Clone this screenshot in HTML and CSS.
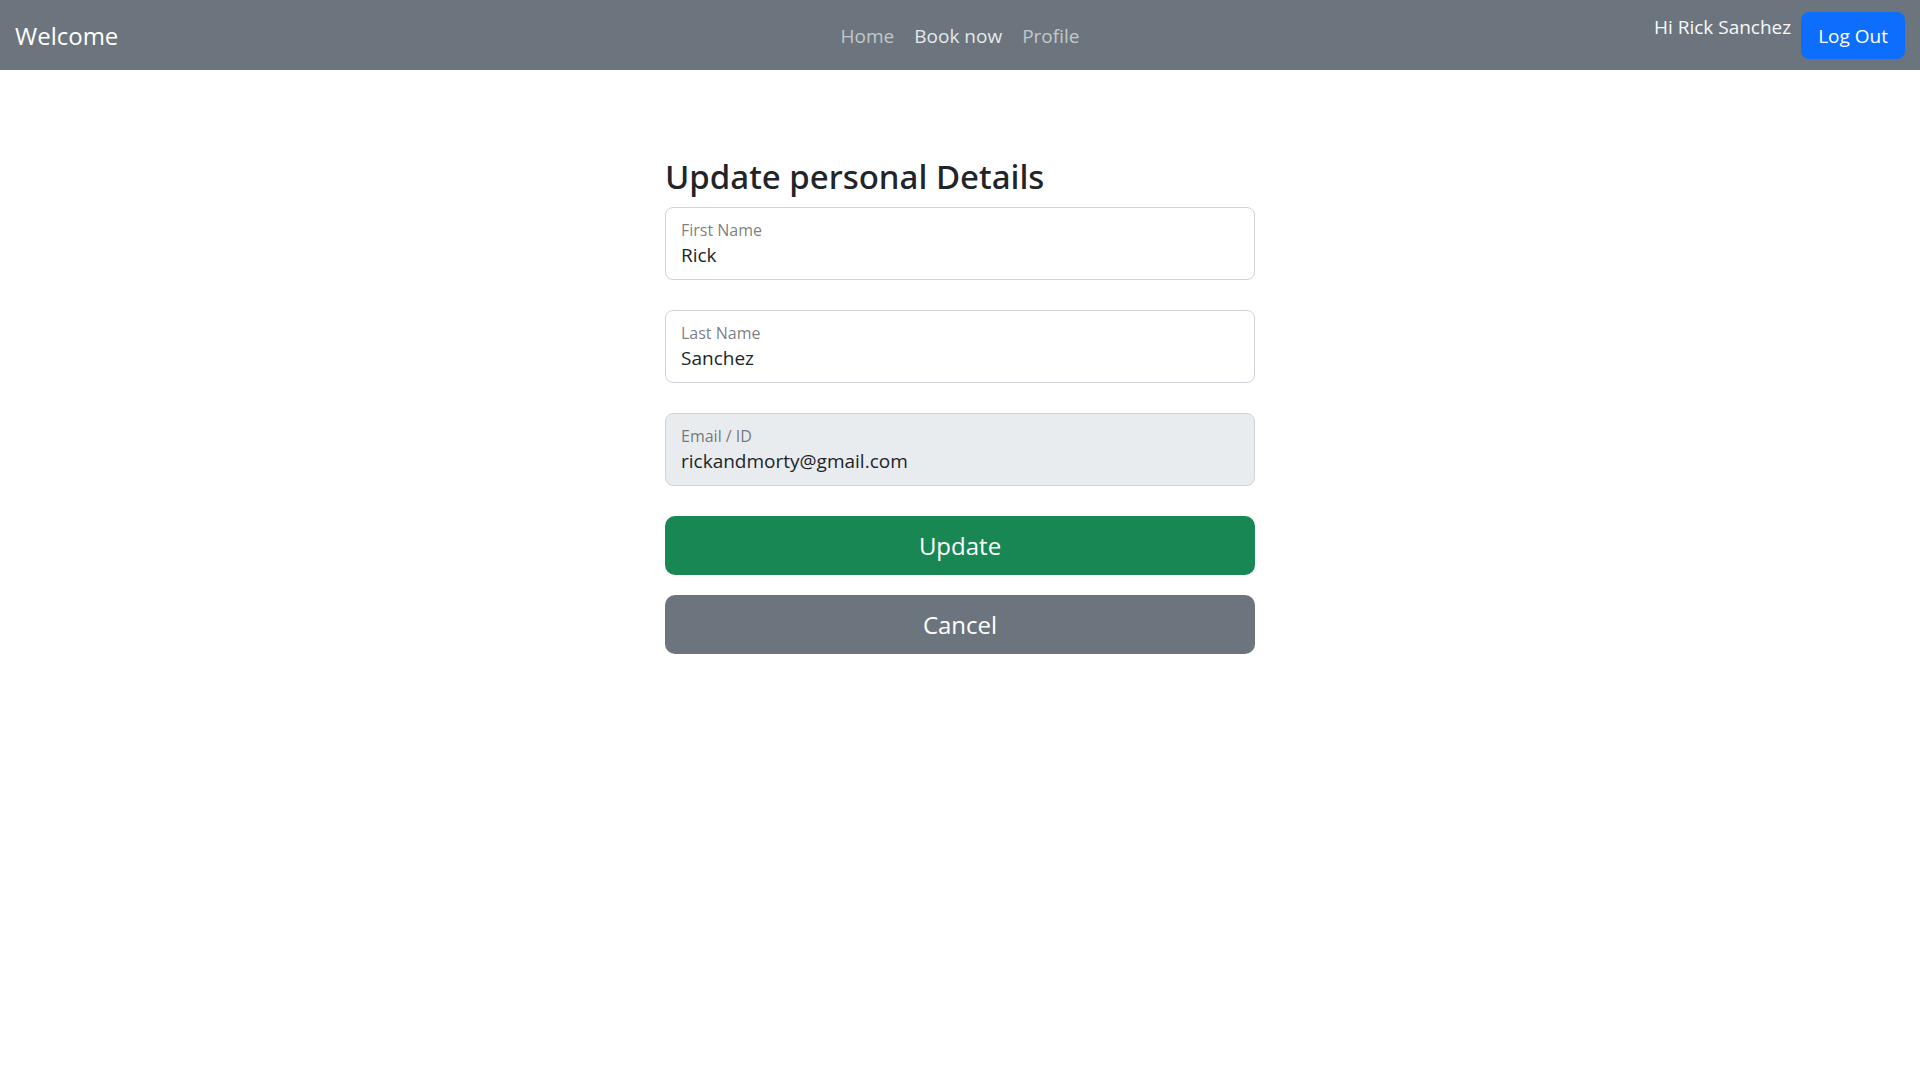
FILE: index.html
```html
<!DOCTYPE html>
<html lang="en">
<head>
  <meta charset="utf-8">
  <meta name="viewport" content="width=device-width, initial-scale=1">
  <title>Update personal Details</title>
  <link rel="stylesheet" href="styles.css">
</head>
<body>
  <header class="navbar">
    <a class="brand" href="#">Welcome</a>
    <nav class="nav-links">
      <a class="nav-link" href="#">Home</a>
      <a class="nav-link nav-link-active" href="#">Book now</a>
      <a class="nav-link" href="#">Profile</a>
    </nav>
    <div class="account">
      <span class="greeting">Hi Rick Sanchez</span>
      <button class="btn btn-primary" type="button">Log Out</button>
    </div>
  </header>
  <main class="page">
    <form class="details">
      <h1 class="title">Update personal Details</h1>
      <div class="field">
        <input class="control" id="first-name" type="text" value="Rick">
        <label class="label" for="first-name">First Name</label>
      </div>
      <div class="field">
        <input class="control" id="last-name" type="text" value="Sanchez">
        <label class="label" for="last-name">Last Name</label>
      </div>
      <div class="field">
        <input class="control" id="email" type="email" value="rickandmorty@gmail.com" readonly>
        <label class="label" for="email">Email / ID</label>
      </div>
      <div class="actions">
        <button class="btn btn-large btn-success" type="submit">Update</button>
        <button class="btn btn-large btn-secondary" type="button">Cancel</button>
      </div>
    </form>
  </main>
</body>
</html>
```
FILE: styles.css
```css
* {
  box-sizing: border-box;
}

body {
  margin: 0;
  background: #fff;
  color: #212529;
  font-family: "Segoe UI", "Open Sans", "Noto Sans", sans-serif;
  font-size: 19px;
  line-height: 30px;
}

/* Navigation bar */
.navbar {
  display: grid;
  grid-template-columns: 1fr auto 1fr;
  align-items: center;
  padding: 12px 15px 11px;
  background: #6c757d;
}

.brand {
  justify-self: start;
  color: #fff;
  font-size: 24px;
  text-decoration: none;
}

.nav-links {
  display: flex;
  gap: 20px;
}

.nav-link {
  color: rgba(255, 255, 255, 0.6);
  text-decoration: none;
}

.nav-link-active {
  color: rgba(255, 255, 255, 0.85);
}

.account {
  display: flex;
  justify-content: flex-end;
  gap: 10px;
}

.greeting {
  color: #f8f9fa;
}

/* Buttons */
.btn {
  padding: 9px 17px 8px;
  border: 0;
  border-radius: 8px;
  color: #fff;
  font: inherit;
  cursor: pointer;
}

.btn-large {
  padding: 15px 20px 14px;
  border-radius: 10px;
  font-size: 24px;
}

.btn-primary {
  background: #0d6efd;
}

.btn-success {
  background: #198754;
}

.btn-secondary {
  background: #6c757d;
}

/* Details form */
.page {
  display: grid;
  grid-template-columns: repeat(3, minmax(0, 1fr));
  gap: 30px;
  padding: 85px 45px;
}

.details {
  grid-column: 2;
}

.title {
  margin: 0 0 8px;
  font-family: "Segoe UI", "Noto Sans", sans-serif;
  font-size: 33px;
  font-weight: 500;
  line-height: 44px;
}

.field {
  position: relative;
  margin-bottom: 30px;
}

.control {
  display: block;
  width: 100%;
  padding: 32px 15px 9px;
  border: 1px solid #ced4da;
  border-radius: 8px;
  background: #fff;
  color: inherit;
  font: inherit;
}

.control:read-only {
  background: #e9ecef;
}

.label {
  position: absolute;
  top: 13px;
  left: 16px;
  color: rgba(33, 37, 41, 0.6);
  font-size: 16px;
  line-height: 20px;
  pointer-events: none;
}

.actions {
  display: grid;
  gap: 20px;
}

@media (max-width: 900px) {
  .page {
    grid-template-columns: minmax(0, 1fr);
    padding: 40px 20px;
  }

  .details {
    grid-column: 1;
  }
}
```
